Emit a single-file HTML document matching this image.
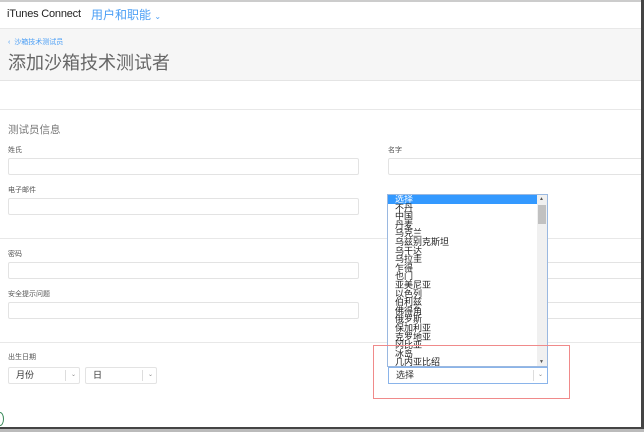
<!DOCTYPE html><html><head><meta charset="utf-8"><style>
*{margin:0;padding:0;box-sizing:border-box}
body{width:644px;height:432px;overflow:hidden;background:#fff;font-family:"Liberation Sans","Noto Sans CJK SC",sans-serif;position:relative}
.a{position:absolute}
.lbl{position:absolute;font-size:7px;color:#555;line-height:8px}
.in{position:absolute;border:1px solid #e3e3e3;border-radius:2px;background:#fff}
.hl{position:absolute;left:0;height:1px;background:#e8e8e8}
.list div{height:8.6px;line-height:8.6px;font-size:9px;padding-left:7px;color:#222;white-space:nowrap}
</style></head><body>
<div class="a" style="left:0;top:0;width:644px;height:2px;background:#ccc"></div>
<div class="a" style="left:7px;top:8px;font-size:11px;color:#222;letter-spacing:-0.2px">iTunes Connect</div>
<div class="a" style="left:91px;top:6px;font-size:12px;color:#4a9ef5">用户和职能 <span style="font-size:8px">⌄</span></div>
<div class="a" style="left:0;top:28px;width:644px;height:53px;background:#f6f6f6;border-top:1px solid #e8e8e8;border-bottom:1px solid #e4e4e4"></div>
<div class="a" style="left:8px;top:37px;font-size:7px;color:#4a9ef5">‹&nbsp; 沙箱技术测试员</div>
<div class="a" style="left:8px;top:52px;font-size:18px;color:#666;line-height:22px">添加沙箱技术测试者</div>
<div class="hl" style="top:109px;width:644px"></div>
<div class="a" style="left:8px;top:122px;font-size:10.5px;color:#777">测试员信息</div>
<div class="lbl" style="left:8px;top:147px">姓氏</div>
<div class="in" style="left:8px;top:158px;width:351px;height:17px"></div>
<div class="lbl" style="left:388px;top:147px">名字</div>
<div class="in" style="left:388px;top:158px;width:260px;height:17px"></div>
<div class="lbl" style="left:8px;top:187px">电子邮件</div>
<div class="in" style="left:8px;top:198px;width:351px;height:17px"></div>
<div class="hl" style="top:238px;width:644px"></div>
<div class="lbl" style="left:8px;top:251px">密码</div>
<div class="in" style="left:8px;top:262px;width:351px;height:17px"></div>
<div class="in" style="left:388px;top:262px;width:260px;height:17px"></div>
<div class="lbl" style="left:8px;top:291px">安全提示问题</div>
<div class="in" style="left:8px;top:302px;width:351px;height:17px"></div>
<div class="in" style="left:388px;top:302px;width:260px;height:17px"></div>
<div class="hl" style="top:342px;width:644px"></div>
<div class="lbl" style="left:8px;top:354px">出生日期</div>
<div class="in" style="left:8px;top:367px;width:72px;height:17px;font-size:9px;line-height:15px;padding-left:7px;color:#333">月份<span style="position:absolute;left:56px;top:2px;height:11px;border-left:1px solid #ddd"></span><span style="position:absolute;left:62px;font-size:6px;color:#888">⌄</span></div>
<div class="in" style="left:85px;top:367px;width:72px;height:17px;font-size:9px;line-height:15px;padding-left:7px;color:#333">日<span style="position:absolute;left:56px;top:2px;height:11px;border-left:1px solid #ddd"></span><span style="position:absolute;left:62px;font-size:6px;color:#888">⌄</span></div>
<div class="a list" style="left:387px;top:194px;width:161px;height:173px;border:1px solid #9ab8e0;background:#fff;overflow:hidden">
<div style="background:#3399ff;color:#fff;width:149px">选择</div><div>不丹</div><div>中国</div><div>丹麦</div><div>乌克兰</div><div>乌兹别克斯坦</div><div>乌干达</div><div>乌拉圭</div><div>乍得</div><div>也门</div><div>亚美尼亚</div><div>以色列</div><div>伯利兹</div><div>佛得角</div><div>俄罗斯</div><div>保加利亚</div><div>克罗地亚</div><div>冈比亚</div><div>冰岛</div><div>几内亚比绍</div>
<div class="a" style="left:149px;top:0;width:10px;height:171px;background:#f0f0f0"></div>
<div class="a" style="left:150px;top:10px;width:8px;height:19px;background:#c1c1c1"></div>
<div class="a" style="left:151px;top:0;font-size:5px;color:#555;padding:0">▲</div>
<div class="a" style="left:151px;top:163px;font-size:5px;color:#555;padding:0">▼</div>
</div>
<div class="a" style="left:388px;top:367px;width:160px;height:17px;border:1px solid #8ab4ea;font-size:9px;line-height:15px;padding-left:7px;color:#333;background:#fff">选择<span style="position:absolute;left:144px;top:2px;height:11px;border-left:1px solid #ddd"></span><span style="position:absolute;left:149px;font-size:6px;color:#888">⌄</span></div>
<div class="a" style="left:373px;top:345px;width:197px;height:54px;border:1px solid #f08a8a"></div>
<div class="a" style="left:-4px;top:412px;width:8px;height:14px;border-radius:50%;border:1px solid #3a8a5a"></div>
<div class="a" style="left:641px;top:0;width:3px;height:432px;background:#444"></div>
<div class="a" style="left:0;top:427px;width:644px;height:2px;background:#444"></div>
<div class="a" style="left:0;top:429px;width:644px;height:3px;background:#bbb"></div>
</body></html>
